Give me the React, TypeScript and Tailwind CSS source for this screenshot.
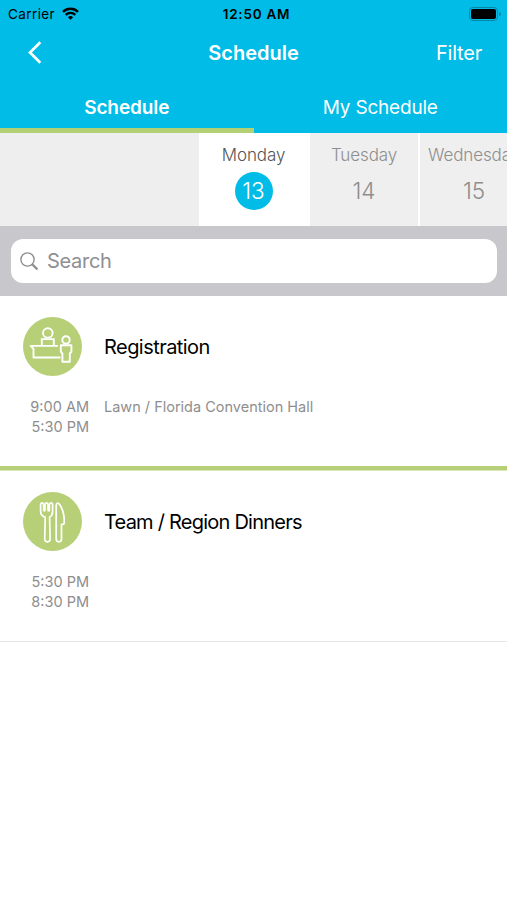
import type { ReactNode } from 'react';

function StatusBar() {
  return (
    <div className="grid h-7 grid-cols-3 items-center pl-2 pr-[6px] text-black">
      <div className="flex items-center gap-[7px]">
        <span className="text-[13.5px] leading-7 tracking-[0.4px]">Carrier</span>
        <svg className="mt-[-2px]" width="17" height="13" viewBox="0 0 17 13" fill="none" stroke="#000" strokeWidth="2.4">
          <path d="M1 4.9a10.6 10.6 0 0 1 15 0" />
          <path d="M3.7 7.9a6.8 6.8 0 0 1 9.6 0" />
          <path d="M8.5 12.8 5.9 10.2a3.7 3.7 0 0 1 5.2 0z" fill="#000" stroke="none" />
        </svg>
      </div>
      <span className="pl-[4px] text-center text-[13.5px] font-semibold leading-7 tracking-[0.75px]">12:50 AM</span>
      <div className="flex items-center justify-end gap-px">
        <div className="mt-[-1px] h-[14px] w-[29px] rounded-[4px] border border-[#0587a5] p-[1px]">
          <div className="h-full w-full rounded-[2px] bg-black" />
        </div>
        <div className="h-[4px] w-[1.5px] rounded-r-full bg-[#0587a5]" />
      </div>
    </div>
  );
}

function Header() {
  return (
    <header className="h-[133px] bg-[#00bce6] text-white">
      <StatusBar />
      <div className="grid h-[49px] grid-cols-3 items-center">
        <svg className="ml-7" width="14" height="24" viewBox="0 0 14 24" fill="none" stroke="#fff" strokeWidth="2.7">
          <path d="M12.3 1.3 2 11.5l10.3 10.2" />
        </svg>
        <span className="text-center text-[20px] font-semibold leading-6">Schedule</span>
        <span className="pr-[25px] text-right text-[20px] leading-6 tracking-[-0.2px]">Filter</span>
      </div>
      <div className="grid h-14 grid-cols-2 text-center text-[19px]">
        <div className="border-b-[5px] border-[#b3d174] pt-[19px] font-semibold leading-6 tracking-[-0.1px]">Schedule</div>
        <div className="pt-[19px] leading-6 tracking-[-0.2px]">My Schedule</div>
      </div>
    </header>
  );
}

function Day({ name, date, active = false }: { name: string; date: string; active?: boolean }) {
  return (
    <div
      className={
        active
          ? 'flex w-[111px] shrink-0 flex-col items-center bg-white pr-[2px] pt-[10px] text-[#555]'
          : 'flex w-[110px] shrink-0 flex-col items-center border-r-2 border-white bg-[#efefef] pt-[10px] text-[#8e8e8e]'
      }
    >
      <span className="text-[17px] font-light leading-6 tracking-[-0.1px]">{name}</span>
      <span
        className={
          active
            ? 'mt-[5px] flex size-[38px] items-center justify-center rounded-full bg-[#00bce6] text-[22.5px] font-light text-white'
            : 'mt-[5px] flex size-[38px] items-center justify-center text-[22.5px] font-light'
        }
      >
        {date}
      </span>
    </div>
  );
}

function RegistrationIcon() {
  return (
    <svg className="size-[59px] rounded-full bg-[#b7d077]" viewBox="0 0 59 59" fill="none" stroke="#fff" strokeWidth="1.9">
      <circle cx="24.8" cy="16" r="4.8" />
      <path d="M18.8 28.4v-6.3h12v6.3" />
      <path d="M34.8 28.9H7.6l2.9 2.9v8.7h27" strokeLinejoin="round" />
      <circle cx="43" cy="22.9" r="3.7" />
      <path d="M37.8 28.2h10.6v6.6l-1.6 1.7v8.2h-7.4v-8.2l-1.6-1.7z" strokeLinejoin="round" />
    </svg>
  );
}

function DinnerIcon() {
  return (
    <svg
      className="size-[59px] rounded-full bg-[#b7d077]"
      viewBox="0 0 59 59"
      fill="none"
      stroke="#fff"
      strokeWidth="1.7"
      strokeLinejoin="round"
      strokeLinecap="round"
    >
      <path d="M17.6 12.6c0-2.2 3-2.2 3 0v5.5c0 1 1.4 1 1.4 0v-5.5c0-2.2 3-2.2 3 0v5.5c0 1 1.4 1 1.4 0v-5.5c0-2.2 3.2-2.2 3.2 0v7c0 3-1.2 4.7-3 5.7l.5 21.8c0 3.6-5.4 3.6-5.4 0l.5-21.8c-2.9-1-4.6-2.7-4.6-5.7z" />
      <path d="M33.2 13.6c0-2.8 2-3.2 3.4-1.2 3.3 4.6 4.7 11.1 4.7 17.9 0 1.4-.6 2-1.6 2h-1.2v14.8c0 3.6-5.3 3.6-5.3 0z" />
    </svg>
  );
}

function Session({
  icon,
  title,
  start,
  end,
  place,
}: {
  icon: ReactNode;
  title: ReactNode;
  start: string;
  end: string;
  place?: string;
}) {
  return (
    <div className="h-[170px] pt-[21px]">
      <div className="flex items-center gap-[22px] pl-[23px]">
        {icon}
        {title}
      </div>
      <div className="mt-[21px] flex text-[14.5px] leading-5 text-[#8e8e8e]">
        <div className="w-[89px] text-right">
          <p>{start}</p>
          <p>{end}</p>
        </div>
        <p className="pl-[15px]">{place}</p>
      </div>
    </div>
  );
}

export default function App() {
  return (
    <div className="h-[900px] w-[507px] overflow-hidden bg-white font-['Inter','Liberation_Sans',sans-serif]">
      <Header />
      <div className="flex h-[93px] overflow-hidden bg-[#efefef]">
        <div className="w-[199px] shrink-0 bg-[#eee]" />
        <Day name="Monday" date="13" active />
        <Day name="Tuesday" date="14" />
        <Day name="Wednesday" date="15" />
      </div>
      <div className="h-[70px] bg-[#c8c7cc] pl-[11px] pr-[10px] pt-[13px]">
        <div className="flex h-11 items-center gap-2 rounded-[12px] bg-white pl-[9px]">
          <svg width="19" height="19" viewBox="0 0 19 19" fill="none" stroke="#8e8e93">
            <circle cx="7.5" cy="7.5" r="6.6" strokeWidth="1.4" />
            <path d="m12.2 12.2 5.2 5.2" strokeWidth="2.2" />
          </svg>
          <span className="text-[20px] leading-6 tracking-[-0.3px] text-[#8e8e93]">Search</span>
        </div>
      </div>
      <Session
        icon={<RegistrationIcon />}
        title={<h2 className="text-[20px] leading-6 tracking-[-0.55px] text-black">Registration</h2>}
        start="9:00 AM"
        end="5:30 PM"
        place="Lawn / Florida Convention Hall"
      />
      <div className="h-[5px] border-b border-[#dbe8bb] bg-[#b7d077]" />
      <Session
        icon={<DinnerIcon />}
        title={<h2 className="text-[20px] leading-6 tracking-[-0.77px] text-black">Team / Region Dinners</h2>}
        start="5:30 PM"
        end="8:30 PM"
      />
      <div className="h-px bg-[#e6e6e6]" />
    </div>
  );
}
